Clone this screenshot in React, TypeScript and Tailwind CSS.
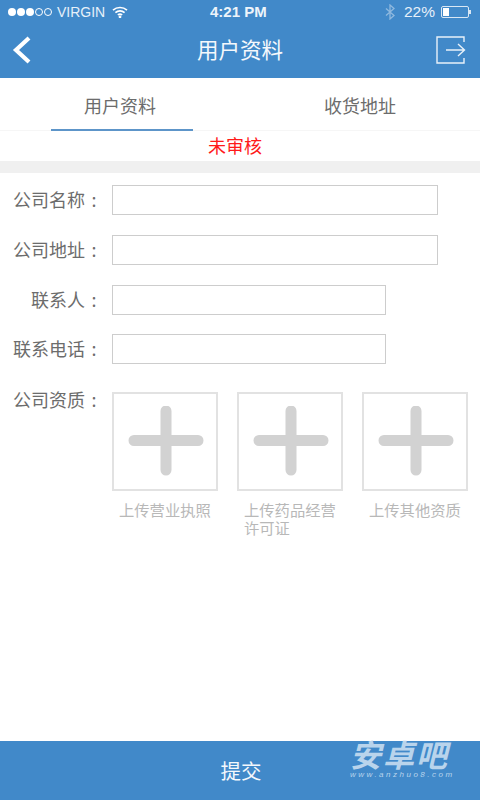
import React from "react";

const cjk = "font-['Noto_Sans_CJK_SC','Noto_Sans',sans-serif]";

function Plus() {
  return (
    <div className="w-[106px] h-[99px] border-2 border-[#e2e2e2] flex items-center justify-center">
      <svg width="80" height="72" viewBox="0 0 80 72">
        <path d="M41 5V64M9 34.5H73" stroke="#d2d2d2" strokeWidth="11" strokeLinecap="round" fill="none" />
      </svg>
    </div>
  );
}

function Label({ text, lh }: { text: string; lh: string }) {
  return (
    <div className={`w-[112px] pr-[9px] flex justify-end text-[18px] ${lh} text-[#6c6c6c] whitespace-nowrap`}>
      <span>{text}</span>
      <span className="w-[18px] text-center">:</span>
    </div>
  );
}

function Row({ label, w, mb }: { label: string; w: string; mb: string }) {
  return (
    <div className={`flex items-center ${mb}`}>
      <Label text={label} lh="leading-[26px] pb-[2px]" />
      <div className={`${w} h-[30px] border border-[#cdcdcd] bg-white`} />
    </div>
  );
}

function Upload({ text, mr }: { text: string; mr: string }) {
  return (
    <div className={`w-[106px] ${mr}`}>
      <Plus />
      <div className="mt-[9px] pl-[7px] text-[15.3px] leading-[18px] text-[#b8b8b8]">{text}</div>
    </div>
  );
}

export default function App() {
  return (
    <div className={`w-[480px] h-[800px] bg-white flex flex-col relative overflow-hidden ${cjk}`}>
      <div className="h-[78px] bg-[#4189c9] text-white flex flex-col shrink-0">
        <div className="h-[24px] flex items-center px-[8px] font-['Liberation_Sans',sans-serif] text-[14px] relative">
          <div className="flex items-center gap-[1px]">
            {[0, 1, 2].map((i) => (
              <span key={i} className="w-[8px] h-[8px] rounded-full bg-white" />
            ))}
            {[0, 1].map((i) => (
              <span key={i} className="w-[8px] h-[8px] rounded-full border border-white" />
            ))}
          </div>
          <span className="ml-[5px] text-[#e6f0f9]">VIRGIN</span>
          <svg className="ml-[7px]" width="16" height="12" viewBox="0 0 16 12" fill="none" stroke="white" strokeWidth="1.6">
            <path d="M1 4.2C5 0.6 11 0.6 15 4.2" />
            <path d="M3.4 6.6C6 4.3 10 4.3 12.6 6.6" />
            <path d="M5.8 9C7 8 9 8 10.2 9" />
            <circle cx="8" cy="10.8" r="0.6" fill="white" />
          </svg>
          <span className="absolute left-[210px] font-bold text-[15px] text-[#edf4fa]">4:21 PM</span>
          <div className="ml-auto flex items-center">
            <svg width="12" height="16" viewBox="0 0 12 16" fill="none" stroke="#8fb9df" strokeWidth="1.3">
              <path d="M2 4.5L10 11.5L6 15V1L10 4.5L2 11.5" />
            </svg>
            <span className="ml-[8px] text-[#e6f0f9] text-[15.5px]">22%</span>
            <div className="ml-[6px] w-[28px] h-[12px] border border-[#d9e7f4] rounded-[2px] p-[1px] flex">
              <div className="w-[6px] bg-white" />
            </div>
            <div className="w-[2px] h-[4px] bg-[#d9e7f4] mr-[1px]" />
          </div>
        </div>
        <div className="flex-1 relative flex items-center justify-center pb-[4px]">
          <svg className="absolute left-[12px] top-[12px]" width="20" height="28" viewBox="0 0 20 28" fill="none" stroke="white" strokeWidth="4.2">
            <path d="M17 2L4 14L17 26" />
          </svg>
          <span className="text-[21.5px] leading-[30px] text-[#f4f8fc]">用户资料</span>
          <svg className="absolute right-[14px] top-[12px]" width="30" height="28" viewBox="0 0 30 28" fill="none" stroke="#e8f1f9" strokeWidth="1.4">
            <path d="M28 6V1H1V27H28V22" />
            <path d="M10 14H28M22 8L28.5 14L22 20" />
          </svg>
        </div>
      </div>

      <div className="h-[53px] flex shrink-0 border-b border-[#f6f6f6]">
        <div className="w-[240px] flex items-center justify-center text-[18px] text-[#6c6c6c] relative pt-[3px]">
          用户资料
          <div className="absolute left-[51px] right-[47px] bottom-[-1px] h-[2px] bg-[#5d95c9]" />
        </div>
        <div className="w-[240px] flex items-center justify-center text-[18px] text-[#6c6c6c] pt-[3px]">收货地址</div>
      </div>

      <div className="h-[30px] flex items-center justify-center shrink-0 text-[18px] text-[#ff1a1a] pr-[10px] pb-[2px]">未审核</div>
      <div className="h-[12px] bg-[#f0f0f0] shrink-0" />

      <div className="flex-1 pt-[12px]">
        <Row label="公司名称" w="w-[326px]" mb="mb-[20px]" />
        <Row label="公司地址" w="w-[326px]" mb="mb-[20px]" />
        <Row label="联系人" w="w-[274px]" mb="mb-[19px]" />
        <Row label="联系电话" w="w-[274px]" mb="mb-[28px]" />
        <div className="flex">
          <Label text="公司资质" lh="leading-[14px]" />
          <Upload text="上传营业执照" mr="mr-[19px]" />
          <Upload text="上传药品经营许可证" mr="mr-[19px]" />
          <Upload text="上传其他资质" mr="" />
        </div>
      </div>

      <div className="h-[59px] bg-[#4189c9] flex items-center justify-center shrink-0 text-[20.5px] text-[#f4f8fc]">
        <span className="ml-[2px]">提交</span>
      </div>

      <div className="absolute left-[350px] top-[741px] w-[110px] text-[#b9d4ec]">
        <div className="text-[31px] leading-[26px] font-bold italic tracking-[2px] whitespace-nowrap">安卓吧</div>
        <div className="text-[8px] leading-[10px] mt-[3px] italic tracking-[2.5px] font-['Liberation_Sans',sans-serif] whitespace-nowrap">www.anzhuo8.com</div>
      </div>
    </div>
  );
}
